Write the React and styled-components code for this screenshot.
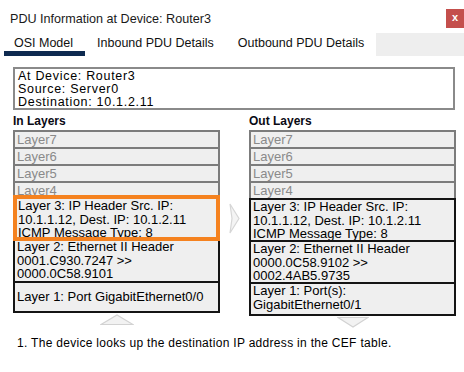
import React from "react";
import styled, { createGlobalStyle } from "styled-components";

const GlobalStyle = createGlobalStyle`
	html, body {
		margin: 0;
		padding: 0;
		background: #fff;
	}
	body {
		font-family: "Liberation Sans", Arial, sans-serif;
		color: #000;
	}
`;

const Window = styled.div`
	width: 464px;
	height: 372px;
	background: #fff;
	overflow: hidden;
`;

const TitleBar = styled.div`
	height: 33px;
	display: flex;
	align-items: center;
	justify-content: space-between;
	padding-top: 4px;
	box-sizing: border-box;
`;

const Title = styled.div`
	padding-left: 10px;
	font-size: 12.6px;
	color: #1a1a1a;
`;

const CloseButton = styled.div`
	width: 18px;
	height: 19px;
	background: #c44f4c;
	color: #fff;
	font-size: 11px;
	font-weight: bold;
	display: flex;
	align-items: center;
	justify-content: center;
	line-height: 1;
	padding-bottom: 2px;
	box-sizing: border-box;
`;

const TabBar = styled.div`
	height: 23px;
	display: flex;
	padding-left: 4px;
`;

const Tab = styled.div`
	display: flex;
	align-items: center;
	padding: 2px 12px 0 ${(p) => (p.$first ? "10px" : "12px")};
	font-size: 12.5px;
	color: #111;
	border-bottom: 5px solid ${(p) => (p.$active ? "#0e2a50" : "transparent")};
`;

const TabFiller = styled.div`
	flex: 1;
	background: #eeeeee;
`;

const Body = styled.div`
	padding: 11px 9px 0 13px;
`;

const InfoBox = styled.div`
	border: 2px solid #8a8a8a;
	padding: 1px 3px 0;
	font-size: 12.5px;
	letter-spacing: 0.7px;
	line-height: 13px;
	box-sizing: border-box;
	height: 43px;
`;

const Columns = styled.div`
	display: grid;
	grid-template-columns: 207px 29px 207px;
	margin-top: 4px;
`;

const Column = styled.div`
	display: flex;
	flex-direction: column;
`;

const Heading = styled.div`
	font-size: 12px;
	font-weight: bold;
	line-height: 14px;
	margin-bottom: 2px;
	color: #0a0a14;
`;

const Stack = styled.div`
	display: flex;
	flex-direction: column;
`;

const Layer = styled.div`
	position: relative;
	z-index: ${(p) => (p.$highlight ? 1 : 0)};
	height: ${(p) => p.$h}px;
	box-sizing: border-box;
	margin-top: ${(p) => (p.$first ? 0 : p.$highlight ? -5 : -2)}px;
	border: ${(p) =>
		p.$highlight
			? "4px solid #f5821f"
			: `2px solid ${p.$dim ? "#7c7c7c" : "#141414"}`};
	background: #efefef;
	color: ${(p) => (p.$dim ? "#8a8a8a" : "#000")};
	font-size: 13px;
	line-height: ${(p) => (p.$dim ? 15 : 13.5)}px;
	padding: 0 ${(p) => (p.$highlight ? 1 : 2)}px;
	overflow: hidden;
	display: flex;
	flex-direction: column;
	justify-content: ${(p) => (p.$center ? "center" : "flex-start")};
	white-space: nowrap;
`;

const Middle = styled.div`
	padding-top: 89px;
	display: flex;
	justify-content: center;
`;

const ArrowRow = styled.div`
	display: flex;
	justify-content: center;
	margin-top: 1px;
	height: 11px;
`;

const Note = styled.div`
	margin-top: 8px;
	padding-left: 4px;
	font-size: 12px;
	letter-spacing: 0.3px;
	line-height: 14px;
`;

const Chevron = () => (
	<svg width="11" height="31" viewBox="0 0 11 31">
		<polygon points="1,1 10,15.5 1,30 3,15.5" fill="#f4f4f4" stroke="#d6d6d6" strokeWidth="1.2" />
	</svg>
);

const UpArrow = () => (
	<svg width="34" height="11" viewBox="0 0 34 11">
		<polygon points="1,10.5 17,1 33,10.5" fill="#f2f2f2" stroke="#d2d2d2" strokeWidth="1.2" />
	</svg>
);

const DownArrow = () => (
	<svg width="32" height="11" viewBox="0 0 32 11">
		<polygon points="1,0.5 16,10 31,0.5" fill="#f2f2f2" stroke="#d2d2d2" strokeWidth="1.2" />
	</svg>
);

const upper = ["Layer7", "Layer6", "Layer5", "Layer4"];

const LayerColumn = ({ title, highlight, layer2, layer1, layer1Center, l1h, arrow }) => (
	<Column>
		<Heading>{title}</Heading>
		<Stack>
			{upper.map((l, i) => (
				<Layer key={l} $dim $first={i === 0} $h={19}>
					{l}
				</Layer>
			))}
			<Layer $highlight={highlight} $h={highlight ? 46 : 44}>
				<span>Layer 3: IP Header Src. IP:</span>
				<span>10.1.1.12, Dest. IP: 10.1.2.11</span>
				<span>ICMP Message Type: 8</span>
			</Layer>
			<Layer $h={highlight ? 45 : 44} style={highlight ? { marginTop: -3 } : undefined}>
				{layer2.map((t) => (
					<span key={t}>{t}</span>
				))}
			</Layer>
			<Layer $h={l1h} $center={layer1Center}>
				{layer1.map((t) => (
					<span key={t}>{t}</span>
				))}
			</Layer>
		</Stack>
		<ArrowRow>{arrow}</ArrowRow>
	</Column>
);

export default function App() {
	return (
		<Window>
			<GlobalStyle />
			<TitleBar>
				<Title>PDU Information at Device: Router3</Title>
				<CloseButton>x</CloseButton>
			</TitleBar>
			<TabBar>
				<Tab $active $first>OSI Model</Tab>
				<Tab>Inbound PDU Details</Tab>
				<Tab>Outbound PDU Details</Tab>
				<TabFiller />
			</TabBar>
			<Body>
				<InfoBox>
					<div>At Device: Router3</div>
					<div>Source: Server0</div>
					<div>Destination: 10.1.2.11</div>
				</InfoBox>
				<Columns>
					<LayerColumn
						title="In Layers"
						highlight
						layer2={["Layer 2: Ethernet II Header", "0001.C930.7247 >>", "0000.0C58.9101"]}
						layer1={["Layer 1: Port GigabitEthernet0/0"]}
						layer1Center
						l1h={32}
						arrow={<UpArrow />}
					/>
					<Middle>
						<Chevron />
					</Middle>
					<LayerColumn
						title="Out Layers"
						layer2={["Layer 2: Ethernet II Header", "0000.0C58.9102 >>", "0002.4AB5.9735"]}
						layer1={["Layer 1: Port(s):", "GigabitEthernet0/1"]}
						l1h={34}
						arrow={<DownArrow />}
					/>
				</Columns>
				<Note>1. The device looks up the destination IP address in the CEF table.</Note>
			</Body>
		</Window>
	);
}
